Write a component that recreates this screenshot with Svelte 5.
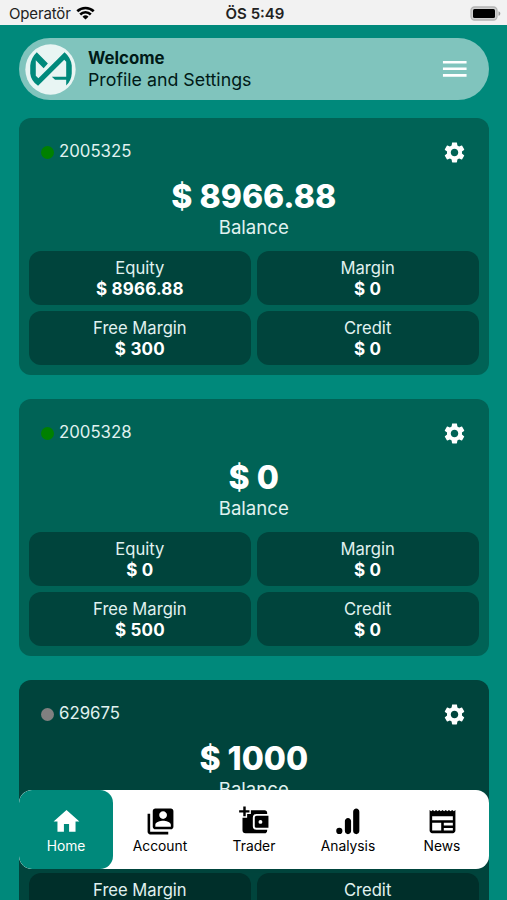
<script>
    const accounts = [
        { id: '2005325', active: true, balance: '8966.88', equity: '8966.88', margin: '0', freeMargin: '300', credit: '0' },
        { id: '2005328', active: true, balance: '0', equity: '0', margin: '0', freeMargin: '500', credit: '0' },
        { id: '629675', active: false, balance: '1000', equity: '1000', margin: '0', freeMargin: '1000', credit: '0' }
    ];

    const tabs = [
        { name: 'Home', icon: 'M10 20v-6h4v6h5v-8h3L12 3 2 12h3v8z' },
        { name: 'Account', icon: 'M4 6H2v14c0 1.1.9 2 2 2h14v-2H4V6zm16-4H8c-1.1 0-2 .9-2 2v12c0 1.1.9 2 2 2h12c1.1 0 2-.9 2-2V4c0-1.1-.9-2-2-2zm-6 2c1.66 0 3 1.34 3 3s-1.34 3-3 3-3-1.34-3-3 1.34-3 3-3zm6 12H8v-1.5c0-1.99 4-3 6-3s6 1.01 6 3V16z' },
        { name: 'Trader', icon: 'M3.3.3h1.900v2.900h2.900v1.900H5.200V8H3.300V5.100H.1V3.200h3.200zM9.200 3.300h10.600c1.200 0 2 .8 2 2v.9H13.500c-1.700 0-2.800 1.100-2.800 2.800v6.600c0 1.700 1.100 2.800 2.800 2.800h8.300v.7c0 1.200-.8 2-2 2H5c-1.400 0-2.300-.9-2.300-2.300V9.100H6.300V6.200h2.900zM13.700 7.500h9.100v9.400h-9.100c-.9 0-1.500-.6-1.500-1.500V9c0-.9.6-1.500 1.500-1.500zm2.900 3.300a1.500 1.500 0 1 0 0 3 1.500 1.500 0 0 0 0-3z' },
        { name: 'Analysis', icon: 'M4.9 16.900a2.400 2.400 0 1 1 0 4.800 2.400 2.400 0 0 1 0-4.800zM11.600 9.200c1.300 0 2.400 1.100 2.400 2.400v7.800c0 1.300-1.100 2.400-2.400 2.400s-2.400-1.100-2.400-2.400v-7.800c0-1.300 1.100-2.400 2.400-2.400zM18 2c1.300 0 2.400 1.100 2.400 2.400v15c0 1.300-1.100 2.400-2.400 2.400s-2.400-1.100-2.400-2.400v-15C15.600 3.100 16.700 2 18 2z' },
        { name: 'News', icon: 'M2 3l1.250 1L4.500 3l1.250 1L7 3l1.250 1L9.500 3l1.250 1L12 3l1.250 1L14.500 3l1.250 1L17 3l1.250 1L19.500 3l1.250 1L22 3v16c0 1.100-.9 2-2 2H4c-1.100 0-2-.9-2-2V3zM11 19v-6H4v6h7zm9 0v-2h-7v2h7zm0-4v-2h-7v2h7zm0-4V8H4v3h16z' }
    ];

    let activeTab = $state('Home');
</script>

<div class="screen">
    <div class="status-bar">
        <div class="carrier">
            <span>Operatör</span>
            <svg width="19" height="14" viewBox="0 0 19 14" fill="none" stroke="#000" stroke-width="2.6">
                <path d="M1.300 5.300a11.700 11.700 0 0 1 16.400 0M4.200 8.500a7.500 7.500 0 0 1 10.600 0" />
                <path d="M9.500 13.500 6.500 10.700a4.300 4.300 0 0 1 6 0z" fill="#000" stroke="none" />
            </svg>
        </div>
        <div class="clock">ÖS 5:49</div>
        <div class="battery">
            <svg width="31" height="15" viewBox="0 0 31 15">
                <rect x="1" y="1" width="26" height="13" rx="3.5" fill="#d0d0d0" stroke="#b4b4b4" stroke-width="1.3" />
                <rect x="3" y="3" width="22" height="9" rx="1.5" fill="#000" />
                <path d="M28.500 5.200c2.400.8 2.400 3.800 0 4.600z" fill="#999" />
            </svg>
        </div>
    </div>

    <div class="content">
        <div class="profile">
            <svg class="avatar" viewBox="0 0 156 156">
                <circle cx="78" cy="78" r="77" fill="#e8f5f3" />
                <path
                    d="M36 25 Q18 42 16 66v24q2 22 24 38l80-80 6 6v46H82l10 9h34v18q16-16 17-37V66q-2-24-22-41l-80 80-8-8V50l24 24 13-14z"
                    fill="#00897b"
                />
            </svg>
            <div class="profile-text">
                <strong>Welcome</strong>
                <span>Profile and Settings</span>
            </div>
            <svg class="menu" viewBox="0 0 24 24" fill="#fff">
                <path d="M3 18h18v-2H3v2zm0-5h18v-2H3v2zm0-7v2h18V6H3z" />
            </svg>
        </div>

        {#each accounts as account}
            <div class="card" class:inactive={!account.active}>
                <div class="card-top">
                    <span class="dot"></span>
                    <span class="number">{account.id}</span>
                    <svg class="gear" viewBox="0 0 24 24" fill="#fff">
                        <path d="M19.140 12.940c.04-.3.060-.610.060-.940 0-.320-.020-.640-.070-.940l2.030-1.580c.180-.140.230-.410.120-.610l-1.920-3.320c-.120-.220-.370-.290-.590-.220l-2.390.960c-.5-.380-1.030-.7-1.620-.940l-.360-2.540c-.040-.240-.240-.410-.480-.410h-3.840c-.240 0-.430.170-.470.410l-.360 2.540c-.590.240-1.130.570-1.620.940l-2.390-.960c-.220-.080-.470 0-.590.220L2.740 8.870c-.120.210-.080.470.120.610l2.030 1.580c-.050.3-.090.630-.090.940s.020.640.070.940l-2.030 1.580c-.180.140-.230.410-.120.610l1.920 3.320c.120.220.370.290.590.220l2.390-.960c.5.380 1.030.7 1.620.940l.36 2.540c.050.240.240.410.480.410h3.840c.240 0 .440-.170.470-.410l.36-2.540c.590-.240 1.130-.560 1.620-.940l2.390.960c.220.080.470 0 .590-.220l1.920-3.320c.120-.220.070-.470-.120-.610l-2.010-1.580zM12 15.600c-1.980 0-3.600-1.620-3.600-3.600s1.620-3.600 3.600-3.600 3.600 1.620 3.600 3.600-1.620 3.600-3.600 3.600z" />
                    </svg>
                </div>
                <div class="amount">$ {account.balance}</div>
                <div class="caption">Balance</div>
                <div class="stats">
                    <div class="stat"><span>Equity</span><b>$ {account.equity}</b></div>
                    <div class="stat"><span>Margin</span><b>$ {account.margin}</b></div>
                    <div class="stat"><span>Free Margin</span><b>$ {account.freeMargin}</b></div>
                    <div class="stat"><span>Credit</span><b>$ {account.credit}</b></div>
                </div>
            </div>
        {/each}
    </div>

    <nav class="tabs">
        {#each tabs as tab}
            <button class="tab" class:active={activeTab === tab.name} onclick={() => (activeTab = tab.name)}>
                <svg width="31" height="31" viewBox="0 0 24 24" fill="currentColor">
                    <path d={tab.icon} />
                </svg>
                <span>{tab.name}</span>
            </button>
        {/each}
    </nav>
</div>

<style>
    :global(body) {
        margin: 0;
        overflow: hidden;
    }

    .screen {
        position: relative;
        height: 100vh;
        overflow: hidden;
        background: #00897b;
        font-family: Inter, sans-serif;
    }

    .status-bar {
        display: grid;
        grid-template-columns: 1fr auto 1fr;
        align-items: center;
        height: 25px;
        padding: 2px 6px 0 9px;
        box-sizing: border-box;
        background: #f2f2f2;
        color: #222;
        font-size: 15px;
    }

    .carrier {
        display: flex;
        align-items: center;
        gap: 5px;
        letter-spacing: -0.15px;
    }

    .carrier svg {
        margin-top: -2px;
    }

    .clock {
        font-weight: 600;
    }

    .battery {
        display: flex;
        justify-content: flex-end;
        margin-top: -1px;
    }

    .content {
        padding: 13px 18.5px 0 19px;
    }

    .profile {
        display: flex;
        align-items: center;
        height: 62px;
        margin-bottom: 18.4px;
        padding: 0 18px 0 6px;
        box-sizing: border-box;
        border-radius: 31px;
        background: #80c4bd;
        color: #001a17;
    }

    .avatar {
        width: 51px;
        height: 51px;
    }

    .profile-text {
        display: flex;
        flex: 1;
        flex-direction: column;
        margin-left: 12px;
        font-size: 17.8px;
        line-height: 22px;
    }

    .profile-text strong {
        font-size: 16.8px;
        font-weight: 700;
    }

    .menu {
        width: 31.5px;
        height: 31.5px;
    }

    .card {
        height: 256.5px;
        margin-bottom: 24.5px;
        padding: 19px 10px 10px;
        box-sizing: border-box;
        border-radius: 12px;
        background: #006356;
        color: #fff;
        text-align: center;
    }

    .card-top {
        display: flex;
        align-items: center;
        height: 28px;
        padding: 0 12px;
    }

    .dot {
        width: 13px;
        height: 13px;
        margin: 2px 5px 0 0;
        border-radius: 50%;
        background: #008000;
    }

    .number {
        flex: 1;
        color: #e0f2f0;
        font-size: 16.8px;
        text-align: left;
    }

    .gear {
        width: 25px;
        height: 25px;
        margin-top: 2px;
    }

    .amount {
        margin-top: 12px;
        font-size: 32px;
        font-weight: 800;
        line-height: 40px;
    }

    .caption {
        margin-top: -2px;
        color: #e0f2f0;
        font-size: 18.6px;
        line-height: 24px;
    }

    .stats {
        display: grid;
        grid-template-columns: 1fr 1fr;
        gap: 6px;
        margin-top: 12px;
    }

    .stat {
        display: flex;
        flex-direction: column;
        justify-content: center;
        height: 54px;
        padding-top: 2px;
        box-sizing: border-box;
        border-radius: 12px;
        background: #00443c;
        font-size: 17px;
        line-height: 21px;
    }

    .stat span {
        color: #e0f2f0;
        font-size: 16.6px;
    }

    .stat b {
        font-weight: 700;
        letter-spacing: 0.2px;
    }

    .inactive {
        background: #00443c;
    }

    .inactive .dot {
        background: #808080;
    }

    .inactive .stat {
        background: #002f2a;
    }

    .tabs {
        position: absolute;
        right: 18px;
        bottom: 31px;
        left: 19px;
        display: flex;
        height: 79px;
        overflow: hidden;
        border-radius: 13px;
        background: #fff;
    }

    .tab {
        display: flex;
        flex: 1;
        flex-direction: column;
        align-items: center;
        padding: 16px 0 0;
        border: 0;
        border-radius: 13px;
        background: none;
        color: #000;
        font-family: inherit;
        font-size: 13.8px;
        line-height: 18px;
    }

    .tab.active {
        background: #00897b;
        color: #fff;
    }
</style>
